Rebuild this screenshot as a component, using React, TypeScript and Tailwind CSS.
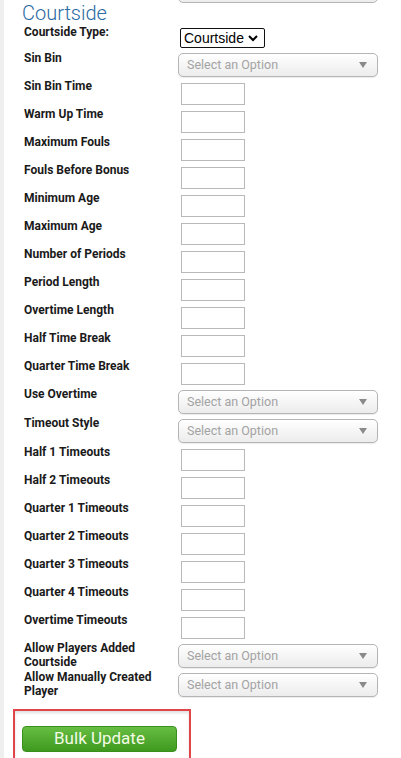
import React from "react";

const rows1: string[] = [
  "Sin Bin Time",
  "Warm Up Time",
  "Maximum Fouls",
  "Fouls Before Bonus",
  "Minimum Age",
  "Maximum Age",
  "Number of Periods",
  "Period Length",
  "Overtime Length",
  "Half Time Break",
  "Quarter Time Break",
];

const rows2: string[] = [
  "Half 1 Timeouts",
  "Half 2 Timeouts",
  "Quarter 1 Timeouts",
  "Quarter 2 Timeouts",
  "Quarter 3 Timeouts",
  "Quarter 4 Timeouts",
  "Overtime Timeouts",
];

const labelCls =
  "w-[180px] shrink-0 pl-[24px] text-[12px] leading-[14px] font-bold text-[#1a1a1a] font-['Roboto',sans-serif]";

function FancySelect() {
  return (
    <div className="flex h-[24px] w-[200px] items-center justify-between rounded-[5px] border border-[#b5b5b5] bg-gradient-to-b from-white to-[#ececec] pl-[8px] pr-[10px] shadow-[0_1px_1px_rgba(0,0,0,0.08)]">
      <span className="text-[12.5px] text-[#a3a3a3] font-['Roboto',sans-serif]">Select an Option</span>
      <svg width="8" height="6" viewBox="0 0 8 6">
        <path d="M0 0 L8 0 L4 6 Z" fill="#8a8a8a" />
      </svg>
    </div>
  );
}

function InputRow({ label }: { label: string }) {
  return (
    <div className="flex h-[28px]">
      <div className={labelCls}>{label}</div>
      <div className="ml-[1px] mt-[4px] h-[22px] w-[64px] border border-[#b9b9b9] bg-white" />
    </div>
  );
}

function SelectRow({ label }: { label: React.ReactNode }) {
  return (
    <div className="flex h-[29px]">
      <div className={labelCls}>{label}</div>
      <div className="-ml-[2px] mt-[3px]">
        <FancySelect />
      </div>
    </div>
  );
}

export default function App() {
  return (
    <div className="relative min-h-[758px] w-[401px] overflow-hidden bg-white">
      <div className="flex">
        <div className="w-[4px] shrink-0 self-stretch bg-[#efefef]" />
        <div className="flex-1 -ml-[4px]">
          <div className="-mt-[21px] ml-[178px] h-[24px] w-[200px] rounded-[5px] border border-[#b5b5b5] bg-gradient-to-b from-white to-[#ececec]" />
          <div className="h-[21px] pl-[22px] text-[20px] leading-[20px] font-light text-[#2a6aa2] font-['Roboto',sans-serif]">
            Courtside
          </div>
          <div className="flex h-[27px]">
            <div className={labelCls + " pt-[1px]"}>Courtside Type:</div>
            <div className="mt-[4px] flex h-[20px] w-[85px] items-center justify-between rounded-[2px] border border-[#111] bg-white pl-[3px] pr-[6px]">
              <span className="text-[14px] leading-[18px] text-black font-['Liberation_Sans',Arial,sans-serif]">Courtside</span>
              <svg width="10" height="7" viewBox="0 0 10 7">
                <path d="M1 1 L5 5 L9 1" stroke="#000" strokeWidth="2" fill="none" />
              </svg>
            </div>
          </div>
          <div className="flex h-[28px]">
            <div className={labelCls}>Sin Bin</div>
            <div className="-ml-[2px] mt-[2px]">
              <FancySelect />
            </div>
          </div>
          {rows1.map((l) => (
            <InputRow key={l} label={l} />
          ))}
          <SelectRow label="Use Overtime" />
          <SelectRow label="Timeout Style" />
          {rows2.map((l) => (
            <InputRow key={l} label={l} />
          ))}
          <SelectRow
            label={
              <>
                Allow Players Added
                <br />
                Courtside
              </>
            }
          />
          <SelectRow
            label={
              <>
                Allow Manually Created
                <br />
                Player
              </>
            }
          />
          <div className="ml-[13px] mt-[10px] h-[51px] w-[178px] border-2 border-[#e0454a] pl-[7px] pt-[15px] shadow-[inset_0_2px_3px_rgba(0,0,0,0.12)]">
            <div className="flex h-[26px] w-[155px] items-center justify-center rounded-[4px] border border-[#3a8f1c] bg-gradient-to-b from-[#66be41] to-[#3e9a1f] text-[17px] text-[#f4fbe6] font-['Roboto',sans-serif]">
              Bulk Update
            </div>
          </div>
        </div>
      </div>
    </div>
  );
}
